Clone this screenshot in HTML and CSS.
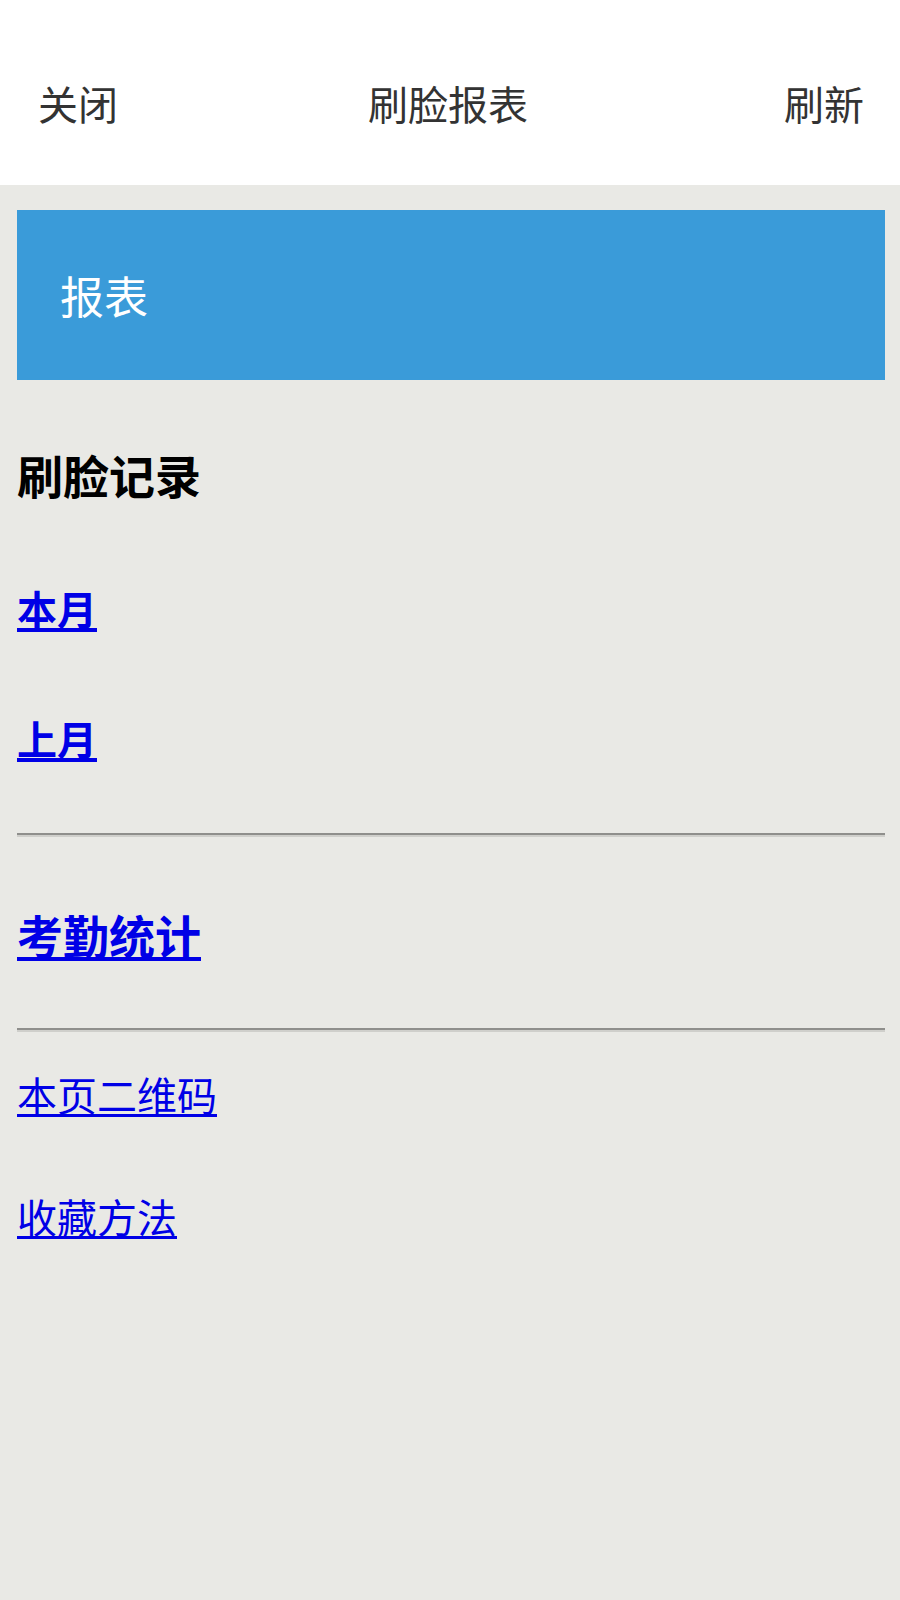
FILE: index.html
```html
<!DOCTYPE html>
<html lang="zh-CN">
<head>
<meta charset="utf-8">
<title>刷脸报表</title>
<link rel="stylesheet" href="styles.css">
</head>
<body>
<header class="topbar">
  <span class="topbar-btn">关闭</span>
  <span class="topbar-title">刷脸报表</span>
  <span class="topbar-btn">刷新</span>
</header>
<main class="content">
  <div class="banner">报表</div>
  <h3 class="section-title">刷脸记录</h3>
  <p class="item item-first"><a class="link bold" href="#">本月</a></p>
  <p class="item item-second"><a class="link bold" href="#">上月</a></p>
  <hr class="rule rule-first">
  <h3 class="item item-stats"><a class="link bold big" href="#">考勤统计</a></h3>
  <hr class="rule rule-second">
  <p class="item item-qr"><a class="link" href="#">本页二维码</a></p>
  <p class="item item-fav"><a class="link" href="#">收藏方法</a></p>
</main>
</body>
</html>
```

FILE: styles.css
```css
html, body {
  margin: 0;
  padding: 0;
}
body {
  background: #e9e9e5;
  font-family: "Noto Sans CJK SC", "Noto Sans", sans-serif;
  min-height: 1600px;
}
.topbar {
  background: #ffffff;
  height: 185px;
  box-sizing: border-box;
  padding: 20px 36px 0 38px;
  display: flex;
  justify-content: space-between;
  align-items: center;
  font-size: 40px;
  color: #333333;
}
.topbar-title {
  margin-right: 6px;
}
.content {
  padding: 0 15px 0 17px;
}
.banner {
  margin-top: 25px;
  height: 170px;
  background: #3a9bd9;
  color: #ffffff;
  font-size: 44px;
  display: flex;
  align-items: center;
  padding-left: 43px;
}
.section-title,
.item {
  margin: 0;
  line-height: 60px;
  font-size: 40px;
}
.section-title {
  margin-top: 64px;
  font-size: 46px;
  font-weight: 700;
  color: #000000;
}
.item-first { margin-top: 74px; }
.item-second { margin-top: 70px; }
.item-stats { margin-top: 67px; font-weight: 700; }
.item-qr { margin-top: 32px; }
.item-fav { margin-top: 62px; }
.link {
  color: #0000e6;
  text-decoration: underline;
  text-decoration-thickness: 3px;
  text-underline-offset: 3px;
}
.link.bold {
  font-weight: 700;
  text-decoration-thickness: 4px;
}
.link.big {
  font-size: 46px;
}
.rule {
  height: 0;
  border: 0;
  border-top: 2px solid #8f8f8c;
  border-bottom: 2px solid #cfcfcb;
  margin: 0;
}
.rule-first { margin-top: 65px; }
.rule-second { margin-top: 61px; }
```
